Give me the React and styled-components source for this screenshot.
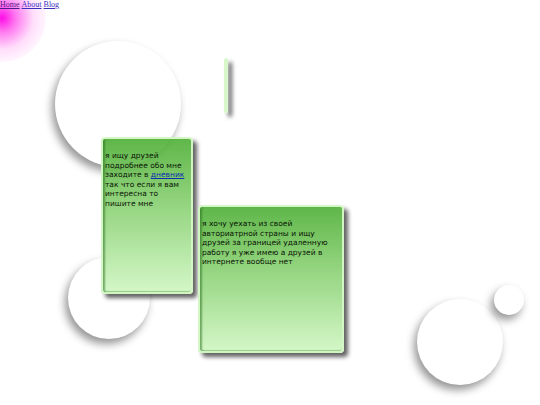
import React from "react";
import styled, { createGlobalStyle } from "styled-components";

const GlobalStyle = createGlobalStyle`
  html, body {
    margin: 0;
    padding: 0;
    background: #fff;
  }
  body {
    font-family: "Liberation Serif", serif;
  }
`;

const Page = styled.div`
  position: relative;
  width: 540px;
  height: 405px;
  overflow: hidden;
  background: #fff;
`;

const Glow = styled.div`
  position: absolute;
  left: -42px;
  top: -26px;
  width: 88px;
  height: 88px;
  border-radius: 50%;
  background: radial-gradient(
    circle at center,
    rgba(255, 0, 230, 0.95) 0%,
    rgba(255, 30, 230, 0.6) 22%,
    rgba(255, 120, 240, 0.25) 50%,
    rgba(255, 200, 250, 0.08) 75%,
    rgba(255, 255, 255, 0) 100%
  );
`;

const Nav = styled.nav`
  position: relative;
  z-index: 3;
  display: flex;
  gap: 2px;
  font-family: "Liberation Serif", serif;
  font-size: 8px;
  line-height: 9px;
`;

const NavLink = styled.a`
  color: ${(p) => (p.$visited ? "#551a8b" : "#3b2fc0")};
  text-decoration: underline;
`;

const Bubble = styled.div`
  position: absolute;
  left: ${(p) => p.$x - p.$r}px;
  top: ${(p) => p.$y - p.$r}px;
  width: ${(p) => p.$r * 2}px;
  height: ${(p) => p.$r * 2}px;
  border-radius: 50%;
  background: #fff;
  box-shadow: -3px 5px 8px rgba(0, 0, 0, 0.42);
  z-index: 1;
`;

const Note = styled.div`
  position: absolute;
  left: ${(p) => p.$x}px;
  top: ${(p) => p.$y}px;
  width: ${(p) => p.$w}px;
  height: ${(p) => p.$h}px;
  box-sizing: border-box;
  z-index: 2;
  padding: ${(p) => (p.$w > 10 ? "12px 4px 0 2px" : "0")};
  border: 2px solid rgba(214, 248, 200, 0.95);
  border-radius: 4px;
  background: linear-gradient(
    to bottom,
    rgba(82, 176, 58, 0.92) 0%,
    rgba(128, 204, 104, 0.87) 40%,
    rgba(206, 246, 192, 0.88) 100%
  );
  box-shadow: 4px 4px 4px rgba(0, 0, 0, 0.62),
    inset 3px 0 2px -1px rgba(40, 110, 30, 0.55),
    inset 0 -2px 1px -1px rgba(120, 180, 100, 0.6);
  font-family: "DejaVu Sans", Verdana, sans-serif;
  font-size: 7.5px;
  line-height: 9.6px;
  color: #0a1406;
  overflow: hidden;
`;

const DiaryLink = styled.a`
  color: #0a2fb0;
  text-decoration: underline;
`;

const bubbles = [
  { x: 118, y: 104, r: 63 },
  { x: 109, y: 298, r: 41 },
  { x: 460, y: 342, r: 43 },
  { x: 509, y: 300, r: 15 },
];

export default function App() {
  return (
    <Page>
      <GlobalStyle />
      <Glow />
      <Nav>
        <NavLink href="#" $visited>
          Home
        </NavLink>
        <NavLink href="#">About</NavLink>
        <NavLink href="#">Blog</NavLink>
      </Nav>

      {bubbles.map((b, i) => (
        <Bubble key={i} $x={b.x} $y={b.y} $r={b.r} />
      ))}

      <Note $x={101} $y={137} $w={92} $h={157}>
        я ищу друзей подробнее обо мне заходите в{" "}
        <DiaryLink href="#">дневник</DiaryLink> так что если я вам интересна
        то пишите мне
      </Note>

      <Note $x={198} $y={205} $w={146} $h={148}>
        я хочу уехать из своей авториатрной страны и ищу друзей за границей
        удаленную работу я уже имею а друзей в интернете вообще нет
      </Note>

      <Note $x={224} $y={58} $w={4} $h={55} />
    </Page>
  );
}
